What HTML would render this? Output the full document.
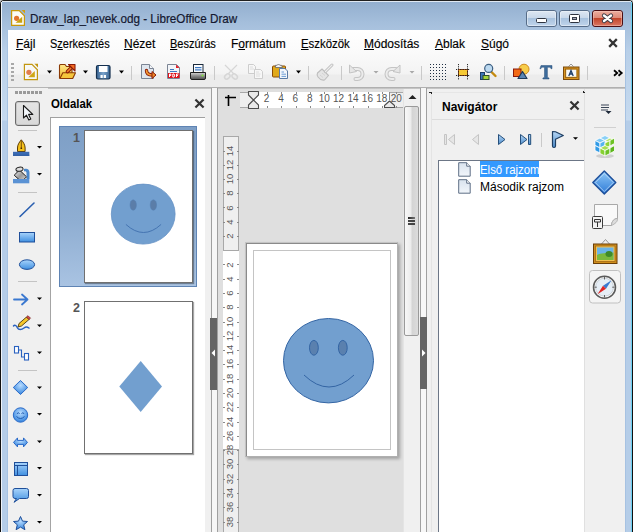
<!DOCTYPE html>
<html><head><meta charset="utf-8">
<style>
*{margin:0;padding:0;box-sizing:border-box}
html,body{width:633px;height:532px;overflow:hidden}
body{position:relative;background:#fff;font-family:"Liberation Sans",sans-serif;font-size:12px;color:#000}
.a{position:absolute}
svg{position:absolute;overflow:visible}
.menu span{position:absolute;top:37px;white-space:nowrap;transform-origin:0 0;-webkit-text-stroke:0.15px #000}
.menu u{text-decoration:underline;text-underline-offset:1px}
.dd{position:absolute;width:0;height:0;border-left:3px solid transparent;border-right:3px solid transparent;border-top:3px solid #000}
.sep{position:absolute;width:1px;background:#c8c8c8}
.hsep{position:absolute;height:1px;background:#c8c8c8}
.rn{position:absolute;width:30px;text-align:center;font-size:10px;line-height:14px;color:#555}
.tk{position:absolute;width:1px;height:2px;background:#8a8a8a}
.tkv{position:absolute;width:2px;height:1px;background:#8a8a8a}
.rv{position:absolute;width:30px;height:12px;text-align:center;font-size:9.5px;line-height:12px;color:#585858;transform:rotate(-90deg)}
</style></head><body>

<!-- window frame -->
<div class="a" style="left:0;top:0;width:633px;height:532px;background:linear-gradient(#93afcf 2px,#a4bedb 22px,#b8cfe8 50px,#c6daef 120px,#b5cde8 121px,#b5cde8)"></div>
<div class="a" style="left:0;top:0;width:633px;height:1px;background:#202020"></div>
<div class="a" style="left:0;top:0;width:1px;height:532px;background:#101010"></div>
<div class="a" style="left:1px;top:1px;width:631px;height:1px;background:#dfe8f2"></div>
<div class="a" style="left:1px;top:1px;width:1px;height:531px;background:#eef3f9"></div>
<div class="a" style="left:7px;top:30px;width:1px;height:502px;background:#a6c2e2"></div>
<div class="a" style="left:625px;top:30px;width:1px;height:502px;background:#a6c2e2"></div>
<div class="a" style="left:631px;top:2px;width:1px;height:530px;background:#6cd0f2"></div>
<div class="a" style="left:632px;top:0;width:1px;height:532px;background:#101010"></div>
<div class="a" style="left:0;top:0;width:4px;height:4px;background:radial-gradient(circle at 4px 4px,transparent 3px,#202020 3.5px,#c8c8c8 4.5px)"></div>
<div class="a" style="left:629px;top:0;width:4px;height:4px;background:radial-gradient(circle at 0 4px,transparent 3px,#202020 3.5px,#c8c8c8 4.5px)"></div>
<!-- title -->
<svg style="left:11px;top:10px" width="15" height="16" viewBox="0 0 15 16">
  <path d="M0.6 0.6H8.2L13.4 5.8V15.4H0.6z" fill="#fbfbf6" stroke="#c8980a" stroke-width="1.2"/>
  <path d="M10.6 0H14V3.4z" fill="#d3a00c"/>
  <circle cx="5.6" cy="8.3" r="2.6" fill="#e2742f"/>
  <path d="M4.6 12.8H11.2V6.8z" fill="#c9a20f"/>
</svg>
<div class="a" style="left:30px;top:11px;font-size:13px;color:#141830;white-space:nowrap;transform:scaleX(0.9);-webkit-text-stroke:0.2px #141830;transform-origin:0 0">Draw_lap_nevek.odg - LibreOffice Draw</div>

<!-- caption buttons -->
<svg style="left:0;top:0" width="633" height="40">
 <defs>
  <linearGradient id="cbB" x1="0" y1="0" x2="0" y2="1">
   <stop offset="0" stop-color="#dfe8f3"/><stop offset="0.47" stop-color="#c8d8ea"/><stop offset="0.5" stop-color="#a8c2de"/><stop offset="1" stop-color="#c2d6ec"/>
  </linearGradient>
  <linearGradient id="cbR" x1="0" y1="0" x2="0" y2="1">
   <stop offset="0" stop-color="#eeb0a2"/><stop offset="0.47" stop-color="#de8a78"/><stop offset="0.5" stop-color="#c2452b"/><stop offset="1" stop-color="#dc7a66"/>
  </linearGradient>
 </defs>
 <rect x="526.5" y="10.5" width="30" height="16" rx="2.5" fill="url(#cbB)" stroke="#566c88" stroke-width="1"/>
 <rect x="527.5" y="11.5" width="28" height="14" rx="1.5" fill="none" stroke="#eef4fa" stroke-width="0.8" opacity="0.7"/>
 <rect x="559.5" y="10.5" width="30" height="16" rx="2.5" fill="url(#cbB)" stroke="#566c88" stroke-width="1"/>
 <rect x="560.5" y="11.5" width="28" height="14" rx="1.5" fill="none" stroke="#eef4fa" stroke-width="0.8" opacity="0.7"/>
 <rect x="592.5" y="10.5" width="30" height="16" rx="2.5" fill="url(#cbR)" stroke="#4a0e14" stroke-width="1"/>
 <rect x="593.5" y="11.5" width="28" height="14" rx="1.5" fill="none" stroke="#f6d0c4" stroke-width="0.8" opacity="0.6"/>
 <!-- min glyph -->
 <rect x="536.5" y="18.5" width="10" height="4" rx="1" fill="#fff" stroke="#2e3440" stroke-width="1"/>
 <!-- max glyph -->
 <rect x="569.5" y="14.5" width="10" height="8" rx="1" fill="#fff" stroke="#2e3440" stroke-width="1"/>
 <rect x="572" y="17" width="5" height="3" fill="#3a404c"/>
 <rect x="573" y="18" width="3" height="1" fill="#aab"/>
 <!-- close glyph -->
 <path d="M604 15.5l7 5.5M611 15.5l-7 5.5" stroke="#3a3a44" stroke-width="4.2" stroke-linecap="round"/>
 <path d="M604 15.5l7 5.5M611 15.5l-7 5.5" stroke="#fff" stroke-width="2.4" stroke-linecap="round"/>
</svg>
<!-- client -->
<div class="a" style="left:8px;top:30px;width:617px;height:502px;background:#f0f0f0"></div>
<!-- menubar + toolbar bg -->
<div class="a" style="left:8px;top:30px;width:617px;height:57px;background:linear-gradient(#ffffff,#fbfbfb 20px,#f3f3f3 44px,#ececec 45px,#ececec)"></div>
<div class="a" style="left:8px;top:87px;width:40px;height:1px;background:#b5b5b5"></div>
<div class="a" style="left:48px;top:87px;width:577px;height:2px;background:linear-gradient(#a6a6a6,#cfcfcf)"></div>

<div class="menu">
<span style="left:16px"><u>F</u>ájl</span>
<span style="left:50px;transform:scaleX(0.913)">S<u>z</u>erkesztés</span>
<span style="left:124px"><u>N</u>ézet</span>
<span style="left:170px;transform:scaleX(0.915)"><u>B</u>eszúrás</span>
<span style="left:231px">F<u>o</u>rmátum</span>
<span style="left:301px;transform:scaleX(0.95)"><u>E</u>szközök</span>
<span style="left:364px"><u>M</u>ódosítás</span>
<span style="left:435px"><u>A</u>blak</span>
<span style="left:481px"><u>S</u>úgó</span>
</div>
<svg style="left:609px;top:39px" width="8" height="8" viewBox="0 0 8 8"><path d="M1 1L7 7M7 1L1 7" stroke="#333" stroke-width="2.3" stroke-linecap="square"/></svg>



<!-- ===== left toolbar ===== -->
<div class="a" style="left:8px;top:88px;width:40px;height:444px;background:#f0f0f0"></div>
<div class="a" style="left:15px;top:101px;width:25px;height:25px;border:1px solid #6a6a6a;border-radius:3px;background:linear-gradient(#e4e4e4,#d8d8d8);box-shadow:inset 0 0 0 1px #c8c8c8"></div>

<!-- ===== pages panel ===== -->
<div class="a" style="left:48px;top:89px;width:163px;height:443px;background:#f0f0f0"></div>
<div class="a" style="left:51px;top:97px;font-weight:bold;font-size:12px;transform:scaleX(0.95);transform-origin:0 0">Oldalak</div>
<svg style="left:195px;top:99px" width="9" height="9" viewBox="0 0 9 9"><path d="M1.2 1.2L7.8 7.8M7.8 1.2L1.2 7.8" stroke="#333" stroke-width="2.2" stroke-linecap="square"/></svg>
<div class="a" style="left:50px;top:117px;width:155px;height:415px;background:#fff;border-top:1px solid #a0a0a0;border-left:1px solid #a4a4a4"></div>
<!-- selected page 1 -->
<div class="a" style="left:59px;top:126px;width:138px;height:161px;background:linear-gradient(#7e9fc6,#8faed2 60%,#a9c3e2);border:1px solid #5f84b4"></div>
<div class="a" style="left:73px;top:131px;font-size:12.5px;font-weight:bold;color:#555">1</div>
<div class="a" style="left:84px;top:130px;width:109px;height:153px;background:#fff;border:1px solid #707070;box-shadow:1px 1px 1px rgba(0,0,0,.35)"></div>
<!-- page 2 -->
<div class="a" style="left:73px;top:301px;font-size:12.5px;font-weight:bold;color:#555">2</div>
<div class="a" style="left:84px;top:301px;width:109px;height:153px;background:#fff;border:1px solid #707070;box-shadow:1px 1px 1px rgba(0,0,0,.35)"></div>

<!-- splitter left -->
<div class="a" style="left:211px;top:88px;width:1px;height:444px;background:#a0a0a0"></div>
<div class="a" style="left:212px;top:88px;width:5px;height:444px;background:#f7f7f7"></div>
<div class="a" style="left:217px;top:88px;width:1px;height:444px;background:#a0a0a0"></div>
<div class="a" style="left:210px;top:318px;width:7px;height:72px;background:#646464"></div>
<svg style="left:210px;top:348px" width="7" height="10" viewBox="0 0 7 10"><path d="M5 1.5L1.5 5 5 8.5z" fill="#fff"/></svg>

<!-- ===== canvas area ===== -->
<div class="a" style="left:218px;top:89px;width:186px;height:443px;background:#dfdfdf"></div>
<!-- horizontal ruler -->
<div class="a" style="left:240px;top:92px;width:163px;height:16px;background:#efefef;border-top:1px solid #a8a8a8;border-bottom:1px solid #a8a8a8"></div>
<div class="a" style="left:253px;top:92px;width:137px;height:16px;background:#fff"></div>
<svg style="left:0;top:0" width="633" height="532">
 <path d="M225 97.5h11M228.5 95v11" stroke="#000" stroke-width="1.6"/>
 <path d="M248.5 91.5h10v3.5l-5 5 5 5v3.5h-10v-3.5l5-5-5-5z" fill="#eaeaea" stroke="#4d4d4d" stroke-width="1.1" stroke-linejoin="round"/>
 <path d="M384.5 107.5v-2l5-4.5 5 4.5v2z" fill="#eaeaea" stroke="#4d4d4d" stroke-width="1.1" stroke-linejoin="round"/>
 <path d="M389.5 92v8" stroke="#8a8a8a" stroke-width="1"/>
</svg>
<!-- vertical ruler -->
<div class="a" style="left:223px;top:136px;width:16px;height:396px;background:#efefef;border-left:1px solid #a8a8a8;border-right:1px solid #a8a8a8;border-top:1px solid #a8a8a8"></div>
<div class="a" style="left:224px;top:250px;width:14px;height:1px;background:#a8a8a8"></div>
<div class="a" style="left:223px;top:251px;width:16px;height:198px;background:#fff"></div>
<div class="a" style="left:224px;top:449px;width:14px;height:1px;background:#a8a8a8"></div>

<!-- ruler numbers -->
<div class="rn" style="left:251.6px;top:92px">2</div>
<div class="tk" style="left:267px;top:92px"></div><div class="tk" style="left:267px;top:106px"></div>
<div class="rn" style="left:266.0px;top:92px">4</div>
<div class="tk" style="left:281px;top:92px"></div><div class="tk" style="left:281px;top:106px"></div>
<div class="rn" style="left:280.4px;top:92px">6</div>
<div class="tk" style="left:296px;top:92px"></div><div class="tk" style="left:296px;top:106px"></div>
<div class="rn" style="left:294.8px;top:92px">8</div>
<div class="tk" style="left:310px;top:92px"></div><div class="tk" style="left:310px;top:106px"></div>
<div class="rn" style="left:309.2px;top:92px">10</div>
<div class="tk" style="left:324px;top:92px"></div><div class="tk" style="left:324px;top:106px"></div>
<div class="rn" style="left:323.6px;top:92px">12</div>
<div class="tk" style="left:339px;top:92px"></div><div class="tk" style="left:339px;top:106px"></div>
<div class="rn" style="left:338.0px;top:92px">14</div>
<div class="tk" style="left:353px;top:92px"></div><div class="tk" style="left:353px;top:106px"></div>
<div class="rn" style="left:352.4px;top:92px">16</div>
<div class="tk" style="left:368px;top:92px"></div><div class="tk" style="left:368px;top:106px"></div>
<div class="rn" style="left:366.8px;top:92px">18</div>
<div class="tk" style="left:382px;top:92px"></div><div class="tk" style="left:382px;top:106px"></div>
<div class="rn" style="left:381.2px;top:92px">20</div>
<div class="tk" style="left:396px;top:92px"></div><div class="tk" style="left:396px;top:106px"></div>
<div class="rv" style="left:214.5px;top:230.0px">2</div>
<div class="tkv" style="left:223px;top:236px"></div><div class="tkv" style="left:237px;top:236px"></div>
<div class="rv" style="left:214.5px;top:215.7px">4</div>
<div class="tkv" style="left:223px;top:222px"></div><div class="tkv" style="left:237px;top:222px"></div>
<div class="rv" style="left:214.5px;top:201.5px">6</div>
<div class="tkv" style="left:223px;top:207px"></div><div class="tkv" style="left:237px;top:207px"></div>
<div class="rv" style="left:214.5px;top:187.2px">8</div>
<div class="tkv" style="left:223px;top:193px"></div><div class="tkv" style="left:237px;top:193px"></div>
<div class="rv" style="left:214.5px;top:173.0px">10</div>
<div class="tkv" style="left:223px;top:179px"></div><div class="tkv" style="left:237px;top:179px"></div>
<div class="rv" style="left:214.5px;top:158.8px">12</div>
<div class="tkv" style="left:223px;top:165px"></div><div class="tkv" style="left:237px;top:165px"></div>
<div class="rv" style="left:214.5px;top:144.5px">14</div>
<div class="tkv" style="left:223px;top:151px"></div><div class="tkv" style="left:237px;top:151px"></div>
<div class="rv" style="left:214.5px;top:258.5px">2</div>
<div class="tkv" style="left:223px;top:264px"></div><div class="tkv" style="left:237px;top:264px"></div>
<div class="rv" style="left:214.5px;top:272.8px">4</div>
<div class="tkv" style="left:223px;top:279px"></div><div class="tkv" style="left:237px;top:279px"></div>
<div class="rv" style="left:214.5px;top:287.0px">6</div>
<div class="tkv" style="left:223px;top:293px"></div><div class="tkv" style="left:237px;top:293px"></div>
<div class="rv" style="left:214.5px;top:301.3px">8</div>
<div class="tkv" style="left:223px;top:307px"></div><div class="tkv" style="left:237px;top:307px"></div>
<div class="rv" style="left:214.5px;top:315.6px">10</div>
<div class="tkv" style="left:223px;top:322px"></div><div class="tkv" style="left:237px;top:322px"></div>
<div class="rv" style="left:214.5px;top:329.9px">12</div>
<div class="tkv" style="left:223px;top:336px"></div><div class="tkv" style="left:237px;top:336px"></div>
<div class="rv" style="left:214.5px;top:344.2px">14</div>
<div class="tkv" style="left:223px;top:350px"></div><div class="tkv" style="left:237px;top:350px"></div>
<div class="rv" style="left:214.5px;top:358.4px">16</div>
<div class="tkv" style="left:223px;top:364px"></div><div class="tkv" style="left:237px;top:364px"></div>
<div class="rv" style="left:214.5px;top:372.7px">18</div>
<div class="tkv" style="left:223px;top:379px"></div><div class="tkv" style="left:237px;top:379px"></div>
<div class="rv" style="left:214.5px;top:387.0px">20</div>
<div class="tkv" style="left:223px;top:393px"></div><div class="tkv" style="left:237px;top:393px"></div>
<div class="rv" style="left:214.5px;top:401.3px">22</div>
<div class="tkv" style="left:223px;top:407px"></div><div class="tkv" style="left:237px;top:407px"></div>
<div class="rv" style="left:214.5px;top:415.6px">24</div>
<div class="tkv" style="left:223px;top:422px"></div><div class="tkv" style="left:237px;top:422px"></div>
<div class="rv" style="left:214.5px;top:429.8px">26</div>
<div class="tkv" style="left:223px;top:436px"></div><div class="tkv" style="left:237px;top:436px"></div>
<div class="rv" style="left:214.5px;top:444.1px">28</div>
<div class="tkv" style="left:223px;top:450px"></div><div class="tkv" style="left:237px;top:450px"></div>
<div class="rv" style="left:214.5px;top:458.4px">30</div>
<div class="tkv" style="left:223px;top:464px"></div><div class="tkv" style="left:237px;top:464px"></div>
<div class="rv" style="left:214.5px;top:472.7px">32</div>
<div class="tkv" style="left:223px;top:479px"></div><div class="tkv" style="left:237px;top:479px"></div>
<div class="rv" style="left:214.5px;top:487.0px">34</div>
<div class="tkv" style="left:223px;top:493px"></div><div class="tkv" style="left:237px;top:493px"></div>
<div class="rv" style="left:214.5px;top:501.2px">36</div>
<div class="tkv" style="left:223px;top:507px"></div><div class="tkv" style="left:237px;top:507px"></div>
<div class="rv" style="left:214.5px;top:515.5px">38</div>
<div class="tkv" style="left:223px;top:522px"></div><div class="tkv" style="left:237px;top:522px"></div>
<!-- page -->
<div class="a" style="left:245px;top:242px;width:153px;height:215px;background:#fff;box-shadow:2px 2px 3px rgba(0,0,0,.28)"></div>
<div class="a" style="left:245px;top:242px;width:153px;height:215px;border-top:1px solid #c4c4c4;border-left:1px solid #c4c4c4;border-right:1px solid #b0b0b0;border-bottom:1px solid #b0b0b0"></div>
<div class="a" style="left:246px;top:243px;width:151px;height:213px;border-top:1px solid #8a8a8a;border-left:1px solid #8a8a8a"></div>
<div class="a" style="left:253px;top:250px;width:138px;height:200px;border:1px solid #c4c4c4"></div>

<!-- vertical scrollbar -->
<div class="a" style="left:403px;top:89px;width:17px;height:443px;background:#f0f0f0;border-left:1px solid #e4e4e4"></div>
<svg style="left:408px;top:94px" width="9" height="6" viewBox="0 0 9 6"><path d="M0.5 5L4.5 1 8.5 5z" fill="#222"/></svg>
<div class="a" style="left:404px;top:106px;width:15px;height:230px;border:1px solid #9a9a9a;border-radius:2px;background:linear-gradient(90deg,#f8f8f8,#ececec 45%,#d4d4d4 55%,#dcdcdc)"></div>
<div class="a" style="left:408px;top:217px;width:7px;height:2px;background:linear-gradient(90deg,#222,#777);box-shadow:0 3px 0 #444,0 6px 0 #444"></div>

<!-- splitter right -->
<div class="a" style="left:420px;top:88px;width:1px;height:444px;background:#a0a0a0"></div>
<div class="a" style="left:421px;top:88px;width:5px;height:444px;background:#f7f7f7"></div>
<div class="a" style="left:426px;top:88px;width:1px;height:444px;background:#a0a0a0"></div>
<div class="a" style="left:420px;top:317px;width:7px;height:72px;background:#646464"></div>
<svg style="left:420px;top:348px" width="7" height="10" viewBox="0 0 7 10"><path d="M2 1.5L5.5 5 2 8.5z" fill="#fff"/></svg>

<!-- ===== navigator ===== -->
<div class="a" style="left:427px;top:89px;width:158px;height:443px;background:#f0f0f0"></div>
<div class="a" style="left:442px;top:100px;font-weight:bold;font-size:12px">Navigátor</div>
<svg style="left:570px;top:101px" width="9" height="9" viewBox="0 0 9 9"><path d="M1.2 1.2L7.8 7.8M7.8 1.2L1.2 7.8" stroke="#333" stroke-width="2.2" stroke-linecap="square"/></svg>
<div class="a" style="left:431px;top:92px;width:154px;height:28px;border-top:1px solid #e6e6e6;border-bottom:1px solid #dcdcdc"></div>
<div class="a" style="left:431px;top:92px;width:1px;height:440px;background:#e4e4e4"></div>
<div class="a" style="left:429px;top:92px;width:3px;height:2px;border-top:1px solid #222;border-right:1px solid #222"></div>
<div class="a" style="left:438px;top:160px;width:147px;height:372px;background:#fff;border-top:1px solid #6c7686;border-left:1px solid #6c7686"></div>
<div class="a" style="left:480px;top:161px;width:59px;height:16px;background:#3399ff"></div>
<div class="a" style="left:480px;top:163px;color:#fff;font-size:12px;white-space:nowrap;transform:scaleX(0.95);transform-origin:0 0">Első rajzom</div>
<div class="a" style="left:480px;top:180px;color:#000;font-size:12px">Második rajzom</div>
<div class="a" style="left:584px;top:89px;width:1px;height:443px;background:#e0e0e0"></div>
<div class="a" style="left:583px;top:91px;width:3px;height:2px;border-bottom:1px solid #222;border-left:1px solid #222"></div>

<!-- ===== sidebar tabbar ===== -->
<div class="a" style="left:585px;top:89px;width:40px;height:443px;background:#f0f0f0"></div>
<div class="a" style="left:594px;top:127px;width:22px;height:1px;background:#d0d0d0"></div>



<!-- shapes -->
<svg style="left:0;top:0" width="633" height="532">
 <!-- main smiley -->
 <ellipse cx="328.5" cy="360.7" rx="45" ry="42.2" fill="#729fcf" stroke="#3465a4" stroke-width="1"/>
 <ellipse cx="313.9" cy="347.8" rx="4.4" ry="7.4" fill="#5a80ae" stroke="#3465a4" stroke-width="1"/>
 <ellipse cx="342.8" cy="347.8" rx="4.4" ry="7.4" fill="#5a80ae" stroke="#3465a4" stroke-width="1"/>
 <path d="M304 375 Q329 399 354 375" fill="none" stroke="#3465a4" stroke-width="1"/>
 <!-- thumb smiley -->
 <ellipse cx="143.2" cy="214.1" rx="31.9" ry="30" fill="#729fcf" stroke="#6590c4" stroke-width="0.8"/>
 <ellipse cx="133.2" cy="205" rx="3.2" ry="5.2" fill="#5b7da8" stroke="#5580b4" stroke-width="0.5"/>
 <ellipse cx="153.4" cy="205" rx="3.2" ry="5.2" fill="#5b7da8" stroke="#5580b4" stroke-width="0.5"/>
 <path d="M125.9 224.4 Q143.5 240.6 161.1 224.4" fill="none" stroke="#3f6fae" stroke-width="0.9"/>
 <!-- diamond -->
 <path d="M140.7 361L162 386.5 140.7 412 119.3 386.5z" fill="#729fcf"/>
</svg>


<!-- left toolbar icons -->
<svg style="left:0;top:0" width="633" height="532">
 <defs>
  <linearGradient id="gB2" x1="0" y1="0" x2="0" y2="1"><stop offset="0" stop-color="#a9d4fb"/><stop offset="1" stop-color="#3f8fe0"/></linearGradient>
  <radialGradient id="gB3" cx="0.5" cy="0.35" r="0.6"><stop offset="0" stop-color="#b8dcff"/><stop offset="1" stop-color="#3d8ae0"/></radialGradient>
 </defs>
 <g fill="#9a9a9a">
  <rect x="15" y="91" width="3" height="3"/><rect x="19" y="91" width="3" height="3"/><rect x="23" y="91" width="3" height="3"/><rect x="27" y="91" width="3" height="3"/><rect x="31" y="91" width="3" height="3"/><rect x="35" y="91" width="3" height="3"/><rect x="39" y="91" width="3" height="3"/>
 </g>
 <!-- cursor -->
 <path d="M23.5 105.5v12.5l3-2.8 2.3 4.8 2-1-2.2-4.6h4.2z" fill="#f4f8fc" stroke="#1a1a1a" stroke-width="1.1" stroke-linejoin="round"/>
 <rect x="18" y="130" width="19" height="1" fill="#c4c4c4"/>
 <!-- line color -->
 <path d="M17.5 151.5v-3.5c0-3 1.5-5.5 3.8-8.2 2.3 2.7 3.8 5.2 3.8 8.2v3.5z" fill="#f6c21a" stroke="#5a3a06" stroke-width="1" stroke-linejoin="round"/>
 <path d="M21.3 140.5v7" stroke="#6a4208" stroke-width="0.9"/>
 <circle cx="21.3" cy="148.2" r="0.9" fill="#4a2a04"/>
 <rect x="13" y="151.8" width="16.3" height="4.2" fill="#3a6ab2"/>
 <rect x="13" y="154.5" width="16.3" height="1.5" fill="#2f5a9c" opacity="0.6"/>
 <path d="M37 146h5l-2.5 2.5z" fill="#000"/>
 <!-- area fill -->
 <defs><linearGradient id="gMet" x1="0" y1="0" x2="1" y2="1"><stop offset="0" stop-color="#f4f4f4"/><stop offset="0.5" stop-color="#9a9a9a"/><stop offset="1" stop-color="#e0e0e0"/></linearGradient></defs>
 <path d="M24 169c3-1 5.5 0 5.5 3.5v6.5h-3v-6c0-1.5-1.2-2-2.5-1.5z" fill="#4a88cc"/>
 <path d="M14.2 175.2l5.3-5.2 7 6.8-5 5z" fill="url(#gMet)" stroke="#222" stroke-width="1" stroke-linejoin="round"/>
 <ellipse cx="19.5" cy="169.2" rx="3.6" ry="2" fill="#dcdcdc" stroke="#222" stroke-width="1" transform="rotate(-10 19.5 169.2)"/>
 <rect x="13" y="179" width="16.3" height="4.3" fill="#5a92d4"/>
 <path d="M37 173h5l-2.5 2.5z" fill="#000"/>
 <rect x="18" y="192" width="19" height="1" fill="#c4c4c4"/>
 <!-- line -->
 <path d="M20 216.5L34 203" stroke="#2a5fb0" stroke-width="1.6" stroke-linecap="round"/>
 <!-- rect -->
 <rect x="19.5" y="232.5" width="15" height="9.5" fill="url(#gB2)" stroke="#1f4f9a" stroke-width="1"/>
 <!-- ellipse -->
 <ellipse cx="27" cy="264.6" rx="7.6" ry="4.8" fill="url(#gB2)" stroke="#1f4f9a" stroke-width="1"/>
 <rect x="18" y="281" width="19" height="1" fill="#c4c4c4"/>
 <!-- arrow -->
 <path d="M14 299.5h13.5M22 294.5l5.5 5-5.5 5" fill="none" stroke="#3a78d0" stroke-width="1.8" stroke-linecap="round" stroke-linejoin="round"/>
 <path d="M37 297.5h5l-2.5 2.5z" fill="#000"/>
 <!-- curve pencil -->
 <path d="M13.5 326c1.5-2 3 0 4 2s4 2 6.5 0 3.5-1 5 0" fill="none" stroke="#2a62c0" stroke-width="1.5" stroke-linecap="round"/>
 <path d="M18 327l1-3.5 7.5-6.5 2.5 2.5-7.5 6.5z" fill="#f5c52a" stroke="#4a3a10" stroke-width="0.9" stroke-linejoin="round"/>
 <path d="M26.5 317l1.5-1.3 2.5 2.5-1.5 1.3z" fill="#e04a4a" stroke="#6a1a1a" stroke-width="0.7"/>
 <path d="M37 324.5h5l-2.5 2.5z" fill="#000"/>
 <!-- connector -->
 <rect x="14.5" y="346.5" width="4" height="6.5" fill="#fff" stroke="#2a62c0" stroke-width="1.1"/>
 <rect x="24.5" y="353.5" width="4" height="6.5" fill="#fff" stroke="#2a62c0" stroke-width="1.1"/>
 <path d="M18.5 350h3v7h3" fill="none" stroke="#2a62c0" stroke-width="1.1"/>
 <path d="M37 351.5h5l-2.5 2.5z" fill="#000"/>
 <rect x="18" y="370" width="19" height="1" fill="#c4c4c4"/>
 <!-- diamond -->
 <path d="M20.5 380.5l7.2 7-7.2 7-7.2-7z" fill="url(#gB3)" stroke="#2a6ac8" stroke-width="1" stroke-linejoin="round"/>
 <path d="M37 386.5h5l-2.5 2.5z" fill="#000"/>
 <!-- smiley -->
 <circle cx="20.5" cy="415" r="7.2" fill="url(#gB3)" stroke="#2a6ac8" stroke-width="1"/>
 <path d="M17 414l1.3-1.5 1.3 1.5M21.5 414l1.3-1.5 1.3 1.5" fill="none" stroke="#1f5ab0" stroke-width="0.9"/>
 <path d="M16.5 416.5q4 4 8 0" fill="none" stroke="#1f5ab0" stroke-width="1"/>
 <path d="M37 413h5l-2.5 2.5z" fill="#000"/>
 <!-- double arrow -->
 <path d="M13.5 442.4l4-4.5v2.5h6v-2.5l4 4.5-4 4.5v-2.5h-6v2.5z" fill="url(#gB3)" stroke="#2a6ac8" stroke-width="1" stroke-linejoin="round"/>
 <path d="M37 440.5h5l-2.5 2.5z" fill="#000"/>
 <!-- flowchart -->
 <rect x="14.5" y="462.5" width="13" height="13" fill="url(#gB2)" stroke="#1f4f9a" stroke-width="1"/>
 <path d="M14.5 465.5h13M17.5 465.5v10" stroke="#1f4f9a" stroke-width="1"/>
 <path d="M37 467h5l-2.5 2.5z" fill="#000"/>
 <!-- callout -->
 <path d="M15 488.5h11.5a2 2 0 0 1 2 2v6a2 2 0 0 1-2 2h-7l-5.5 3.8 2.5-3.8h-1.5a2 2 0 0 1-2-2v-6a2 2 0 0 1 2-2z" fill="url(#gB2)" stroke="#1f4f9a" stroke-width="1" stroke-linejoin="round"/>
 <path d="M37 494h5l-2.5 2.5z" fill="#000"/>
 <!-- star -->
 <path d="M20.5 516.5l2 4.6 5 .4-3.8 3.3 1.2 4.9-4.4-2.6-4.4 2.6 1.2-4.9-3.8-3.3 5-.4z" fill="url(#gB3)" stroke="#1f4f9a" stroke-width="1" stroke-linejoin="round"/>
 <path d="M37 521h5l-2.5 2.5z" fill="#000"/>
</svg>


<!-- navigator & sidebar icons -->
<svg style="left:0;top:0" width="633" height="532">
 <defs>
  <linearGradient id="gDoc" x1="0" y1="0" x2="0" y2="1"><stop offset="0" stop-color="#d9e3ee"/><stop offset="1" stop-color="#f2f6fb"/></linearGradient>
  <linearGradient id="gNav" x1="0" y1="0" x2="0" y2="1"><stop offset="0" stop-color="#b6d6f4"/><stop offset="1" stop-color="#4f8fcf"/></linearGradient>
  <linearGradient id="gDia" x1="0" y1="0" x2="0" y2="1"><stop offset="0" stop-color="#8ec8f8"/><stop offset="1" stop-color="#2e7ad6"/></linearGradient>
 </defs>
 <!-- tree docs -->
 <path d="M458.7 162.7h8l3.5 3.5v10h-11.5z" fill="url(#gDoc)" stroke="#5f6f86" stroke-width="1"/>
 <path d="M466.7 162.7v3.5h3.5" fill="#fff" stroke="#5f6f86" stroke-width="1"/>
 <path d="M458.7 179.7h8l3.5 3.5v10h-11.5z" fill="url(#gDoc)" stroke="#5f6f86" stroke-width="1"/>
 <path d="M466.7 179.7v3.5h3.5" fill="#fff" stroke="#5f6f86" stroke-width="1"/>
 <!-- nav buttons -->
 <g fill="#e6e6e6" stroke="#c4c4c4" stroke-width="1" stroke-linejoin="round">
  <rect x="444.5" y="134.5" width="2" height="10"/>
  <path d="M454.5 134.5v10l-6-5z"/>
  <path d="M478.5 134.5v10l-6-5z"/>
 </g>
 <g fill="url(#gNav)" stroke="#26507c" stroke-width="1" stroke-linejoin="round">
  <path d="M498.5 134.5v10l6.5-5z"/>
  <path d="M520.5 134.5v10l6.5-5z"/>
  <rect x="528.5" y="134.5" width="2.2" height="10"/>
 </g>
 <rect x="541" y="133" width="1" height="14" fill="#c9c9c9"/>
 <path d="M552.5 131.5c1 0 2 0 3 .3l7.8 3.7-7.8 3.8v6.7a1.5 1.5 0 0 1-3 0z" fill="url(#gNav)" stroke="#1e3e62" stroke-width="1.2" stroke-linejoin="round"/>
 <path d="M573 137.2h5l-2.5 2.6z" fill="#000"/>
 <!-- sidebar: menu -->
 <path d="M601 105h8M601 107.5h8M601 110h7" stroke="#3a4556" stroke-width="1"/>
 <path d="M605.5 111h6l-3 3z" fill="#1e2a3a"/>
 <!-- cube -->
 <ellipse cx="605" cy="156" rx="9" ry="2" fill="#cfcfcf"/>
 <g stroke="#fff" stroke-width="0.8" stroke-linejoin="round">
  <path d="M595 140.5l5-2.5 5 2.5-5 2.5z" fill="#7cc6f4"/>
  <path d="M595 140.5v5l5 2.5v-5z" fill="#2f9ae6"/>
  <path d="M600 143v5l5-2.5v-5z" fill="#54b4f0"/>
  <path d="M600 138l5-2.5 5 2.5-5 2.5z" fill="#8ad0f6"/>
  <path d="M605 140.5l5-2.5 5 2.5-5 2.5z" fill="#b4e46a"/>
  <path d="M605 143v5.5l5-2.5v-5.5z" fill="#8fd43a"/>
  <path d="M610 140.5v5.5l4.5-2.5v-5.5z" fill="#6cc224"/>
  <path d="M595 145.5v5l5 2.5v-5z" fill="#2f9ae6"/>
  <path d="M600 148l5-2.5 5 2.5-5 2.5z" fill="#a6e052"/>
  <path d="M600 148v5.5l5 2.5v-5.5z" fill="#86d030"/>
  <path d="M605 150.5v5.5l5-2.5v-5.5z" fill="#6cc224"/>
  <path d="M610 148v5.5l4.5-2.5v-5.5z" fill="#5cb61c"/>
 </g>
 <!-- diamond -->
 <path d="M604.3 171l11.5 11.5-11.5 11.5-11.5-11.5z" fill="url(#gDia)" stroke="#1e4f9a" stroke-width="1.4" stroke-linejoin="round"/>
 <path d="M604.3 173.5l9 9-9 9-9-9z" fill="none" stroke="#cfe6fb" stroke-width="0.8" opacity="0.8"/>
 <!-- page w/ clip -->
 <path d="M594.5 204.5h23v14c-2 0-4 1-5 3s-1 3-1 4h-17z" fill="#f9f9f9" stroke="#a8a8a8" stroke-width="1"/>
 <path d="M617.5 218.5c-2 0-4 1-5 3s-1 3-1 4c2-1 3.5-2 4.5-3s1.5-2 1.5-4z" fill="#dcdcdc" stroke="#a8a8a8" stroke-width="0.8"/>
 <rect x="592.5" y="216.5" width="10" height="12" rx="1" fill="#f4f4f4" stroke="#3c3c3c" stroke-width="1"/>
 <path d="M594.5 219.5h6v2.5h-6zM597.5 222v5" fill="none" stroke="#333" stroke-width="1"/>
 <!-- picture frame -->
 <path d="M601.5 244l4-4.5 4 4.5" fill="none" stroke="#8a8a8a" stroke-width="0.9"/>
 <rect x="593.5" y="244" width="23.5" height="19.5" fill="#d08e1c" stroke="#6a3e08" stroke-width="1"/>
 <rect x="595.5" y="246" width="19.5" height="15.5" fill="#f0c050" stroke="#9a6010" stroke-width="0.7"/>
 <rect x="597" y="247.5" width="16.5" height="12.5" fill="#6ab4e8"/>
 <path d="M597 255c4-2 9-2 16.5-2.5v7.5h-16.5z" fill="#7ab83e"/>
 <ellipse cx="609" cy="254" rx="3.5" ry="3" fill="#3e8a2a"/>
 <!-- navigator compass button -->
 <rect x="589.5" y="270.5" width="31" height="32.5" rx="3" fill="#f4f4f4" stroke="#c0c0c0" stroke-width="1"/>
 <circle cx="604.5" cy="287.2" r="11" fill="#fbfbfb" stroke="#5a5a5a" stroke-width="1.5"/>
 <circle cx="604.5" cy="287.2" r="9" fill="#e6eef6" stroke="#b0b8c0" stroke-width="0.6"/>
 <path d="M604.5 277v2.5M604.5 295v2.5M594.3 287.2h2.5M612.2 287.2h2.5" stroke="#555" stroke-width="0.9"/>
 <path d="M611.5 280.2l-5.5 8.5-3-3z" fill="#3a7ad0"/>
 <path d="M597.5 294.2l5.5-8.5 3 3z" fill="#e02424"/>
</svg>

<!-- top toolbar icons -->
<svg style="left:0;top:0" width="633" height="532">
 <defs>
  <linearGradient id="gFolder" x1="0" y1="0" x2="0" y2="1"><stop offset="0" stop-color="#ffe88a"/><stop offset="1" stop-color="#f1b92a"/></linearGradient>
  <linearGradient id="gBlue" x1="0" y1="0" x2="0" y2="1"><stop offset="0" stop-color="#9dc9f5"/><stop offset="1" stop-color="#3d85d8"/></linearGradient>
  <linearGradient id="gPrint" x1="0" y1="0" x2="0" y2="1"><stop offset="0" stop-color="#d8d8d8"/><stop offset="0.5" stop-color="#8a8a8a"/><stop offset="1" stop-color="#505050"/></linearGradient>
  <linearGradient id="gFloppy" x1="0" y1="0" x2="1" y2="0"><stop offset="0" stop-color="#3a6592"/><stop offset="0.5" stop-color="#7aa3cc"/><stop offset="1" stop-color="#3a6592"/></linearGradient>
 </defs>
 <!-- gripper -->
 <g fill="#a8a8a8">
  <rect x="11" y="63" width="3" height="2"/><rect x="11" y="67" width="3" height="2"/><rect x="11" y="71" width="3" height="2"/><rect x="11" y="75" width="3" height="2"/><rect x="11" y="79" width="3" height="2"/>
 </g>
 <!-- new draw -->
 <path d="M24.4 64.4h7.6l5.4 5.4v9.8h-13z" fill="#f7f7f4" stroke="#c2960f" stroke-width="1.2"/>
 <path d="M34.4 63.8h3.6v3.6z" fill="#c2960f"/>
 <circle cx="28.9" cy="72.3" r="2.6" fill="#e27d4c"/>
 <path d="M28.2 77.2h6.6v-6.2z" fill="#cfa614"/>
 <!-- dd -->
 <path d="M47 70.5h5l-2.5 3z" fill="#000"/>
 <!-- open folder -->
 <path d="M59.5 78.5V65.5a1 1 0 0 1 1-1h4.5l1.5 2h5.5v7" fill="url(#gFolder)" stroke="#8a3a06" stroke-width="1.1" stroke-linejoin="round"/>
 <path d="M60 78.5l2.8-5.8h12.7l-2.8 5.8z" fill="#f6c63c" stroke="#8a3a06" stroke-width="1.1" stroke-linejoin="round"/>
 <path d="M67.5 71.5l5-5" stroke="#8a1a08" stroke-width="3.6" stroke-linecap="round"/>
 <path d="M67.5 71.5l5-5" stroke="#f5822a" stroke-width="1.6" stroke-linecap="round"/>
 <path d="M68.5 64.5h6.5v6.5z" fill="#f36a20" stroke="#8a1a08" stroke-width="1.1" stroke-linejoin="round"/>
 <path d="M83 70.5h5l-2.5 3z" fill="#000"/>
 <!-- save -->
 <rect x="96.5" y="65.5" width="13.5" height="13.5" rx="1.5" fill="url(#gFloppy)" stroke="#15304f" stroke-width="1.2"/>
 <rect x="99" y="66" width="8.5" height="6" fill="#fff"/>
 <rect x="99.5" y="72.5" width="0" height="0"/>
 <rect x="100.5" y="75" width="2.2" height="3" fill="#fff"/><rect x="103.8" y="75" width="2.2" height="3" fill="#fff"/>
 <path d="M119 70.5h5l-2.5 3z" fill="#000"/>
 <rect x="131" y="66" width="1" height="14" fill="#c9c9c9"/>
 <!-- export -->
 <path d="M141.5 64.5h8l4 4v10h-12z" fill="#dfe6ee" stroke="#7b8494" stroke-width="1"/>
 <path d="M149.5 64.5v4h4" fill="#f4f6f9" stroke="#7b8494" stroke-width="1"/>
 <path d="M146.5 70.5c0 3 2 4.5 6 4.5" fill="none" stroke="#8a1b06" stroke-width="3.4" stroke-linecap="round"/>
 <path d="M146.5 70.5c0 3 2 4.5 6 4.5" fill="none" stroke="#f39a35" stroke-width="1.6" stroke-linecap="round"/>
 <path d="M152 71.5l4 3.5-4 3.5z" fill="#f08a28" stroke="#8a1b06" stroke-width="1"/>
 <!-- pdf -->
 <path d="M167.5 64.5h9l3 3v11h-12z" fill="#f3f5f8" stroke="#7b8494" stroke-width="1"/>
 <path d="M176 64.5l3.5 3.5h-3.5z" fill="#e0202a"/>
 <rect x="170" y="69" width="4" height="1" fill="#3e78c0"/><rect x="170" y="71" width="7" height="1" fill="#3e78c0"/>
 <rect x="168" y="73" width="11.5" height="5" fill="#e0141e"/>
 <path d="M169.5 74v3M169.5 74h1.3v1.5h-1.3M172.8 74v3h1.2l.6-.8v-1.4l-.6-.8h-1.2M176.5 77v-3h2M176.5 75.4h1.5" fill="none" stroke="#fff" stroke-width="1"/>
 <!-- print -->
 <rect x="193.5" y="64.5" width="9.5" height="8" fill="#fbfcfe" stroke="#1a2a3c" stroke-width="1"/>
 <rect x="195" y="67" width="6.5" height="1.2" fill="#3b78c4"/><rect x="195" y="69.3" width="6.5" height="1.2" fill="#3b78c4"/>
 <path d="M190.5 72.5h15v5.5a1.5 1.5 0 0 1-1.5 1.5h-12a1.5 1.5 0 0 1-1.5-1.5z" fill="url(#gPrint)" stroke="#1f1f1f" stroke-width="1"/>
 <circle cx="202.5" cy="75.5" r="1.1" fill="#7ee23a"/>
 <rect x="214" y="66" width="1" height="14" fill="#c9c9c9"/>
 <!-- scissors gray -->
 <g stroke="#d6d6d6" fill="none">
  <path d="M225 65l9 9M237 65l-9 9" stroke-width="1.2"/>
  <ellipse cx="227.3" cy="76.5" rx="3" ry="2.2" stroke-width="1.5" transform="rotate(-40 227.3 76.5)"/>
  <ellipse cx="234.7" cy="76.5" rx="3" ry="2.2" stroke-width="1.5" transform="rotate(40 234.7 76.5)"/>
 </g>
 <!-- copy gray -->
 <path d="M248.5 64.5h5l2 2v7h-7z" fill="#f7f7f7" stroke="#cdcdcd"/>
 <path d="M254.5 69.5h6l2 2v7h-8z" fill="#f7f7f7" stroke="#cdcdcd"/>
 <path d="M250 67h3M250 69h4M256 72h3M256 74h4.5M256 76h4" stroke="#d8d8d8" stroke-width="0.8"/>
 <!-- paste -->
 <rect x="272.5" y="66" width="13" height="11" rx="1" fill="#e0a91a" stroke="#8a4a06" stroke-width="1"/>
 <path d="M275.5 67.5h7l-1-2.2h-1.5a1.8 1.8 0 0 0-3 0h-1.5z" fill="#f4f4f4" stroke="#666" stroke-width="0.8"/>
 <path d="M279.5 68.5h5.5l2.5 2.5v7.5h-8z" fill="#f2f6fb" stroke="#5a7aa4" stroke-width="1"/>
 <path d="M281.5 72h2.5M281.5 74.2h4.5M281.5 76.4h4.5" stroke="#4a86cc" stroke-width="0.8"/>
 <path d="M296 70.5h5l-2.5 3z" fill="#000"/>
 <rect x="308" y="66" width="1" height="14" fill="#c9c9c9"/>
 <!-- clone gray -->
 <path d="M317.5 73l4.5-4 6.5 6.5-4 4.5c-2 .5-5-1-6.5-3s-1-3-.5-4z" fill="#e4e4e4" stroke="#bdbdbd" stroke-width="1.1" stroke-linejoin="round"/>
 <path d="M320 75l3 2.5M322 73l3 2.5" stroke="#cfcfcf" stroke-width="0.8"/>
 <path d="M325.5 71.5l6.5-6.5" stroke="#bdbdbd" stroke-width="3" stroke-linecap="round"/>
 <path d="M325.5 71.5l6.5-6.5" stroke="#ededed" stroke-width="1.2" stroke-linecap="round"/>
 <rect x="341" y="66" width="1" height="14" fill="#c9c9c9"/>
 <!-- undo gray -->
 <path d="M353 69h4.5a5 5 0 0 1 0 10h-2" fill="none" stroke="#c4c4c4" stroke-width="4" stroke-linecap="round"/>
 <path d="M353 69h4.5a5 5 0 0 1 0 10h-2" fill="none" stroke="#ececec" stroke-width="2" stroke-linecap="round"/>
 <path d="M349.5 65v8l7-1.5z" fill="#e6e6e6" stroke="#c4c4c4" stroke-width="1" stroke-linejoin="round"/>
 <path d="M373.5 71h5l-2.5 2.5z" fill="#a8a8a8"/>
 <!-- redo gray -->
 <path d="M396 69h-4.5a5 5 0 0 0 0 10h2" fill="none" stroke="#c4c4c4" stroke-width="4" stroke-linecap="round"/>
 <path d="M396 69h-4.5a5 5 0 0 0 0 10h2" fill="none" stroke="#ececec" stroke-width="2" stroke-linecap="round"/>
 <path d="M400 65v8l-7-1.5z" fill="#e6e6e6" stroke="#c4c4c4" stroke-width="1" stroke-linejoin="round"/>
 <path d="M409.5 71h5l-2.5 2.5z" fill="#a8a8a8"/>
 <rect x="421" y="66" width="1" height="14" fill="#c9c9c9"/>
 <!-- grid -->
 <g fill="#1e2e42" shape-rendering="crispEdges"><rect x="430" y="64" width="1" height="1"/><rect x="433" y="64" width="1" height="1"/><rect x="436" y="64" width="1" height="1"/><rect x="439" y="64" width="1" height="1"/><rect x="442" y="64" width="1" height="1"/><rect x="445" y="64" width="1" height="1"/><rect x="430" y="67" width="1" height="1"/><rect x="433" y="67" width="1" height="1"/><rect x="436" y="67" width="1" height="1"/><rect x="439" y="67" width="1" height="1"/><rect x="442" y="67" width="1" height="1"/><rect x="445" y="67" width="1" height="1"/><rect x="430" y="70" width="1" height="1"/><rect x="433" y="70" width="1" height="1"/><rect x="436" y="70" width="1" height="1"/><rect x="439" y="70" width="1" height="1"/><rect x="442" y="70" width="1" height="1"/><rect x="445" y="70" width="1" height="1"/><rect x="430" y="73" width="1" height="1"/><rect x="433" y="73" width="1" height="1"/><rect x="436" y="73" width="1" height="1"/><rect x="439" y="73" width="1" height="1"/><rect x="442" y="73" width="1" height="1"/><rect x="445" y="73" width="1" height="1"/><rect x="430" y="76" width="1" height="1"/><rect x="433" y="76" width="1" height="1"/><rect x="436" y="76" width="1" height="1"/><rect x="439" y="76" width="1" height="1"/><rect x="442" y="76" width="1" height="1"/><rect x="445" y="76" width="1" height="1"/><rect x="430" y="79" width="1" height="1"/><rect x="433" y="79" width="1" height="1"/><rect x="436" y="79" width="1" height="1"/><rect x="439" y="79" width="1" height="1"/><rect x="442" y="79" width="1" height="1"/><rect x="445" y="79" width="1" height="1"/></g>
 <!-- helplines -->
 <rect x="458.5" y="69.5" width="9" height="6" fill="#f6c934" stroke="#3a2a10" stroke-width="1"/>
 <path d="M456 69.5h2M468 69.5h2M456 75.5h2M468 75.5h2M458.5 64v5M458.5 76v4M467.5 64v5M467.5 76v4" stroke="#2b2b2b" stroke-width="1" stroke-dasharray="1.2 1"/>
 <path d="M459 69.5h8M459 75.5h8M458.5 70v5M467.5 70v5" stroke="#d04a20" stroke-width="1" stroke-dasharray="1 1.5" opacity="0.7"/>
 <!-- zoom pan -->
 <rect x="480.5" y="72.5" width="4" height="7" fill="#3d78b8" stroke="#1d3e66" stroke-width="1"/>
 <rect x="483" y="75.5" width="6" height="4" fill="#a4d43a" stroke="#2d4e2a" stroke-width="1"/>
 <path d="M491 71.5l4.5 4.5" stroke="#c48a10" stroke-width="2.4" stroke-linecap="round"/>
 <circle cx="488.7" cy="68.4" r="4" fill="#bcd9f0" stroke="#3c5e80" stroke-width="1.2"/>
 <rect x="504" y="66" width="1" height="14" fill="#c9c9c9"/>
 <!-- shapes -->
 <circle cx="524" cy="69.2" r="5" fill="#f7cd4a" stroke="#d18a18" stroke-width="1"/>
 <rect x="513.5" y="69" width="7.5" height="7.5" fill="#f26a16" stroke="#8a1a0a" stroke-width="1"/>
 <path d="M522.5 71.5l4.5 7h-9z" fill="#5a86b4" stroke="#1e3a5c" stroke-width="1.2" stroke-linejoin="round"/>
 <!-- T -->
 <path d="M541 65.5h11v3.2h-1l-0.8-1.5h-2.8v10.2l1.6 0.6v1h-6.1v-1l1.6-0.6v-10.2h-2.8l-0.8 1.5h-1z" fill="#3d6c9c" stroke="#2a4f78" stroke-width="0.5"/>
 <!-- frame -->
 <path d="M568.5 66.5l2.5-2.5 2.5 2.5" fill="none" stroke="#9a9a9a" stroke-width="1"/>
 <rect x="563.5" y="67" width="15.5" height="12.5" fill="#d9941e" stroke="#7b4a0c" stroke-width="1"/>
 <rect x="565.5" y="69" width="11.5" height="8.5" fill="#f3d08a" stroke="#8a560e" stroke-width="0.8"/>
 <rect x="566.5" y="70" width="9.5" height="6.5" fill="#f4f7fb"/>
 <path d="M568.8 76l2.2-5.5 2.2 5.5M569.7 74h2.6" fill="none" stroke="#1f3f6a" stroke-width="1.3"/>
 <rect x="587" y="66" width="1" height="14" fill="#c9c9c9"/>
 <!-- chevrons -->
 <path d="M614 70.3l3.2 2.7-3.2 2.7M618.5 70.3l3.2 2.7-3.2 2.7" fill="none" stroke="#000" stroke-width="1.8"/>
</svg>

</body></html>
